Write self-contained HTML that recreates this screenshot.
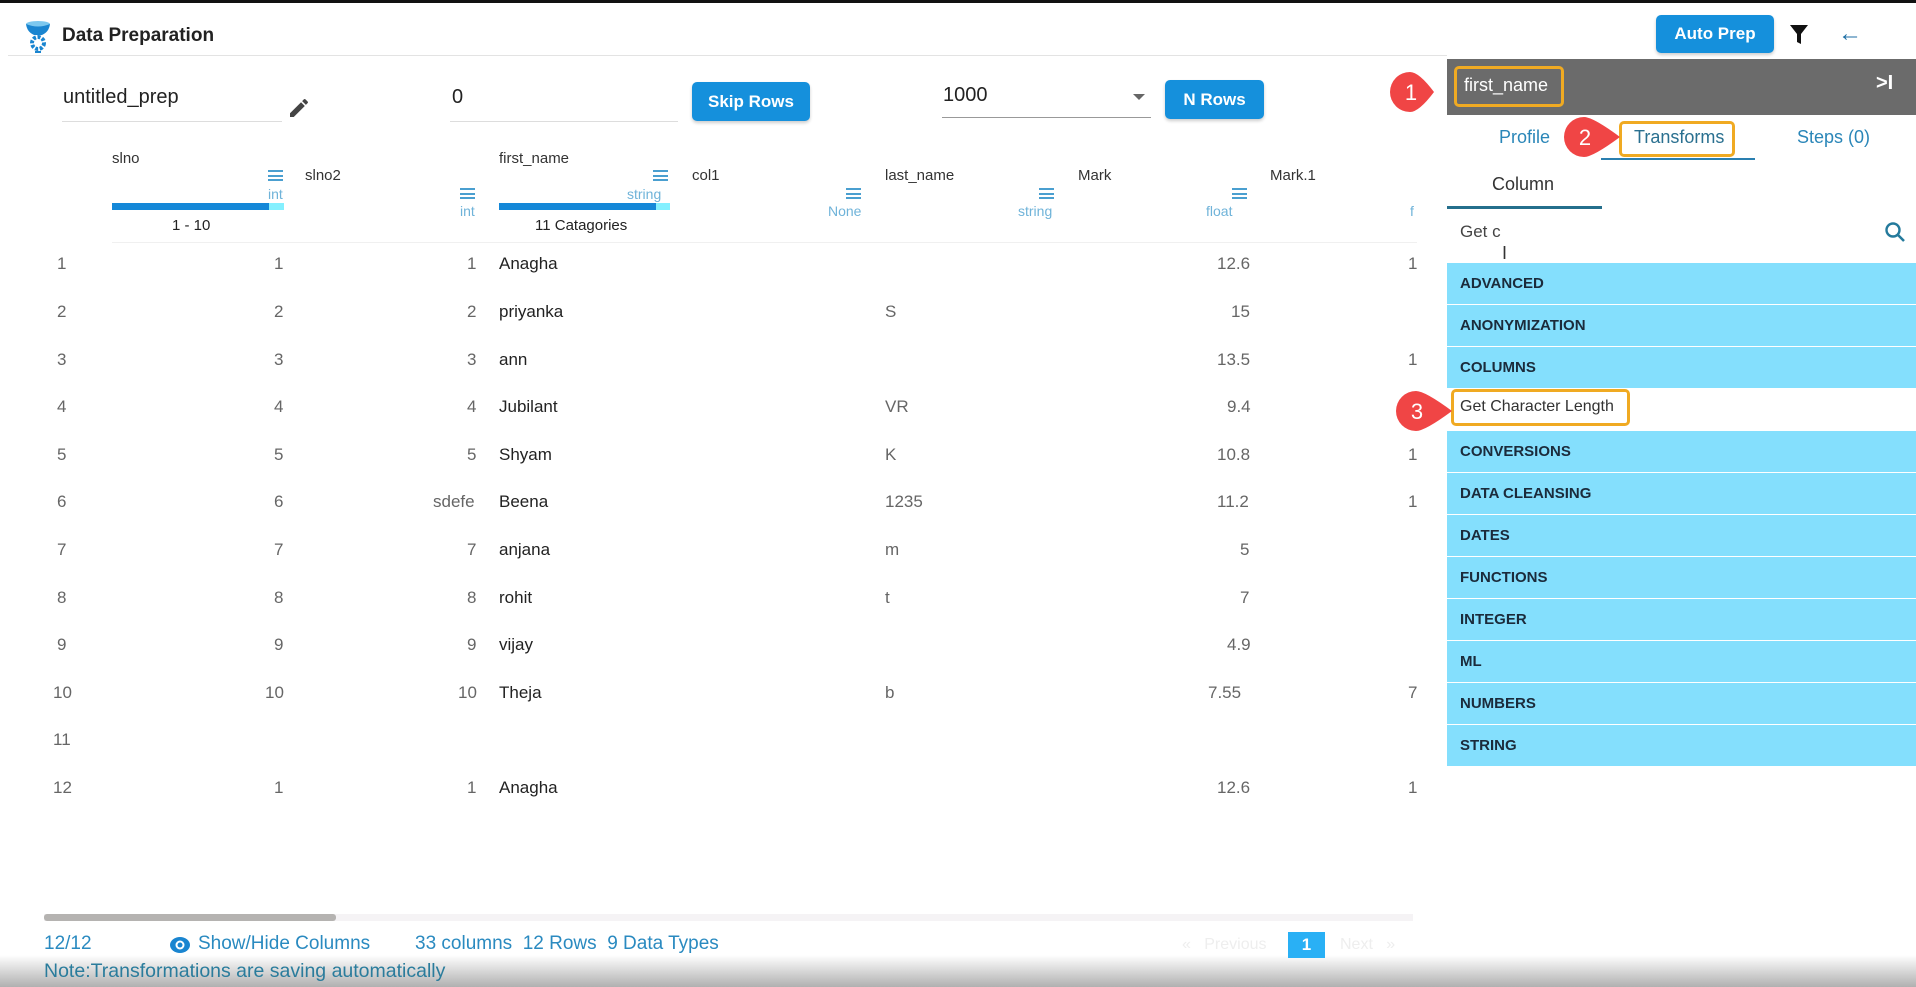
<!DOCTYPE html>
<html><head><meta charset="utf-8">
<style>
*{margin:0;padding:0;box-sizing:border-box}
body{width:1916px;height:987px;overflow:hidden;background:#fff;font-family:"Liberation Sans",sans-serif;position:relative;color:#222}
.a{position:absolute;white-space:nowrap}
.btn{position:absolute;background:#1590dc;color:#fff;border-radius:5px;font-size:17px;font-weight:bold;display:flex;align-items:center;justify-content:center;box-shadow:0 2px 3px rgba(0,0,0,.2)}
.hd{font-size:15px;color:#333}
.ty{font-size:14px;color:#6fb3d9}
.mn{position:absolute;width:15px;height:11px;border-top:2px solid #4a9fd0;border-bottom:2px solid #4a9fd0}
.mn:after{content:"";position:absolute;left:0;right:0;top:2.5px;height:2px;background:#4a9fd0}
.c{font-size:17px;color:#666;position:absolute}
.n{font-size:17px;color:#222;position:absolute}
.cat{position:absolute;left:1447px;width:469px;height:41px;background:#84dffd;font-size:15px;font-weight:bold;color:#1b2b3b;padding-left:13px;line-height:41px}
.box{position:absolute;border:3px solid #f0aa22;border-radius:5px}
.ft{font-size:19px;color:#2a8ac0}
</style></head><body>
<div class="a" style="left:0;top:0;width:1916px;height:3px;background:#111"></div>
<svg class="a" style="left:24px;top:20px" width="28" height="34" viewBox="0 0 28 34">
<ellipse cx="14" cy="4" rx="12" ry="3" fill="#7cc8ef"/>
<path d="M2 4 Q3 12 10 15 L18 15 Q25 12 26 4 Q14 9 2 4Z" fill="#1a85d0"/>
<circle cx="14" cy="23" r="6" fill="none" stroke="#1a85d0" stroke-width="4" stroke-dasharray="3 1.6"/>
<circle cx="14" cy="23" r="2" fill="#fff"/>
<rect x="11" y="31" width="6" height="2" fill="#1a85d0"/>
</svg>
<div class="a" style="left:62px;top:25px;font-size:19px;font-weight:bold;color:#222">Data Preparation</div>
<div class="a" style="left:8px;top:55px;width:1439px;height:1px;background:#e3e3e3"></div>
<div class="btn" style="left:1656px;top:15px;width:118px;height:38px">Auto Prep</div>
<svg class="a" style="left:1790px;top:25px" width="18" height="20" viewBox="0 0 18 20"><path d="M0 0H18L11 9V19L7 17V9Z" fill="#111"/></svg>
<div class="a" style="left:1838px;top:20px;font-size:24px;color:#1c6ea4">←</div>

<div class="a" style="left:63px;top:86px;font-size:20px;color:#222">untitled_prep</div>
<div class="a" style="left:62px;top:121px;width:220px;height:1px;background:#ddd"></div>
<svg class="a" style="left:287px;top:96px" width="24" height="24" viewBox="0 0 24 24"><path d="M3 17.25V21h3.75L17.81 9.94l-3.75-3.75L3 17.25zM20.71 7.04a1 1 0 000-1.41l-2.34-2.34a1 1 0 00-1.41 0l-1.83 1.83 3.75 3.75 1.83-1.83z" fill="#444"/></svg>
<div class="a" style="left:452px;top:86px;font-size:20px;color:#222">0</div>
<div class="a" style="left:450px;top:121px;width:228px;height:1px;background:#ddd"></div>
<div class="btn" style="left:692px;top:82px;width:118px;height:39px">Skip Rows</div>
<div class="a" style="left:943px;top:84px;font-size:20px;color:#222">1000</div>
<div class="a" style="left:1133px;top:94px;width:0;height:0;border-left:6px solid transparent;border-right:6px solid transparent;border-top:6px solid #666"></div>
<div class="a" style="left:942px;top:117px;width:209px;height:1px;background:#999"></div>
<div class="btn" style="left:1165px;top:80px;width:99px;height:39px">N Rows</div>

<div class="a hd" style="left:112px;top:150px">slno</div>
<div class="mn" style="left:268px;top:170px"></div>
<div class="a ty" style="left:268px;top:186px">int</div>
<div class="a" style="left:112px;top:203px;width:172px;height:7px;background:#84f0ff"></div>
<div class="a" style="left:112px;top:203px;width:157px;height:7px;background:#1488d8"></div>
<div class="a" style="left:172px;top:217px;font-size:15px;color:#222">1 - 10</div>

<div class="a hd" style="left:305px;top:167px">slno2</div>
<div class="mn" style="left:460px;top:188px"></div>
<div class="a ty" style="left:460px;top:203px">int</div>

<div class="a hd" style="left:499px;top:150px">first_name</div>
<div class="mn" style="left:653px;top:170px"></div>
<div class="a ty" style="left:627px;top:186px">string</div>
<div class="a" style="left:499px;top:203px;width:171px;height:7px;background:#84f0ff"></div>
<div class="a" style="left:499px;top:203px;width:157px;height:7px;background:#1488d8"></div>
<div class="a" style="left:535px;top:217px;font-size:15px;color:#222">11 Catagories</div>

<div class="a hd" style="left:692px;top:167px">col1</div>
<div class="mn" style="left:846px;top:188px"></div>
<div class="a ty" style="left:828px;top:203px">None</div>

<div class="a hd" style="left:885px;top:167px">last_name</div>
<div class="mn" style="left:1039px;top:188px"></div>
<div class="a ty" style="left:1018px;top:203px">string</div>

<div class="a hd" style="left:1078px;top:167px">Mark</div>
<div class="mn" style="left:1232px;top:188px"></div>
<div class="a ty" style="left:1206px;top:203px">float</div>

<div class="a hd" style="left:1270px;top:167px">Mark.1</div>
<div class="a ty" style="left:1410px;top:203px">f</div>
<div class="a" style="left:112px;top:242px;width:1305px;height:1px;background:#f0f0f0"></div>

<div class="c" style="left:57px;top:254px">1</div><div class="c" style="left:274px;top:254px">1</div><div class="c" style="left:467px;top:254px">1</div><div class="n" style="left:499px;top:254px">Anagha</div><div class="c" style="left:1217px;top:254px">12.6</div><div class="c" style="left:1408px;top:254px">1</div>
<div class="c" style="left:57px;top:302px">2</div><div class="c" style="left:274px;top:302px">2</div><div class="c" style="left:467px;top:302px">2</div><div class="n" style="left:499px;top:302px">priyanka</div><div class="c" style="left:885px;top:302px">S</div><div class="c" style="left:1231px;top:302px">15</div>
<div class="c" style="left:57px;top:350px">3</div><div class="c" style="left:274px;top:350px">3</div><div class="c" style="left:467px;top:350px">3</div><div class="n" style="left:499px;top:350px">ann</div><div class="c" style="left:1217px;top:350px">13.5</div><div class="c" style="left:1408px;top:350px">1</div>
<div class="c" style="left:57px;top:397px">4</div><div class="c" style="left:274px;top:397px">4</div><div class="c" style="left:467px;top:397px">4</div><div class="n" style="left:499px;top:397px">Jubilant</div><div class="c" style="left:885px;top:397px">VR</div><div class="c" style="left:1227px;top:397px">9.4</div>
<div class="c" style="left:57px;top:445px">5</div><div class="c" style="left:274px;top:445px">5</div><div class="c" style="left:467px;top:445px">5</div><div class="n" style="left:499px;top:445px">Shyam</div><div class="c" style="left:885px;top:445px">K</div><div class="c" style="left:1217px;top:445px">10.8</div><div class="c" style="left:1408px;top:445px">1</div>
<div class="c" style="left:57px;top:492px">6</div><div class="c" style="left:274px;top:492px">6</div><div class="c" style="left:433px;top:492px">sdefe</div><div class="n" style="left:499px;top:492px">Beena</div><div class="c" style="left:885px;top:492px">1235</div><div class="c" style="left:1217px;top:492px">11.2</div><div class="c" style="left:1408px;top:492px">1</div>
<div class="c" style="left:57px;top:540px">7</div><div class="c" style="left:274px;top:540px">7</div><div class="c" style="left:467px;top:540px">7</div><div class="n" style="left:499px;top:540px">anjana</div><div class="c" style="left:885px;top:540px">m</div><div class="c" style="left:1240px;top:540px">5</div>
<div class="c" style="left:57px;top:588px">8</div><div class="c" style="left:274px;top:588px">8</div><div class="c" style="left:467px;top:588px">8</div><div class="n" style="left:499px;top:588px">rohit</div><div class="c" style="left:885px;top:588px">t</div><div class="c" style="left:1240px;top:588px">7</div>
<div class="c" style="left:57px;top:635px">9</div><div class="c" style="left:274px;top:635px">9</div><div class="c" style="left:467px;top:635px">9</div><div class="n" style="left:499px;top:635px">vijay</div><div class="c" style="left:1227px;top:635px">4.9</div>
<div class="c" style="left:53px;top:683px">10</div><div class="c" style="left:265px;top:683px">10</div><div class="c" style="left:458px;top:683px">10</div><div class="n" style="left:499px;top:683px">Theja</div><div class="c" style="left:885px;top:683px">b</div><div class="c" style="left:1208px;top:683px">7.55</div><div class="c" style="left:1408px;top:683px">7</div>
<div class="c" style="left:53px;top:730px">11</div>
<div class="c" style="left:53px;top:778px">12</div><div class="c" style="left:274px;top:778px">1</div><div class="c" style="left:467px;top:778px">1</div><div class="n" style="left:499px;top:778px">Anagha</div><div class="c" style="left:1217px;top:778px">12.6</div><div class="c" style="left:1408px;top:778px">1</div>

<div class="a" style="left:44px;top:914px;width:1369px;height:7px;background:#f5f3f5"></div>
<div class="a" style="left:44px;top:914px;width:292px;height:7px;background:#b5b3b1;border-radius:3px"></div>

<div class="a" style="left:0;top:955px;width:1916px;height:32px;background:linear-gradient(#fff,#b0b0b0)"></div>
<div class="a ft" style="left:44px;top:933px">12/12</div>
<svg class="a" style="left:169px;top:936px" width="22" height="18" viewBox="0 0 22 18"><ellipse cx="11" cy="9" rx="10" ry="8" fill="#1a85d0"/><circle cx="11" cy="9" r="4.5" fill="#fff"/><circle cx="11" cy="9" r="2.5" fill="#1a85d0"/></svg>
<div class="a ft" style="left:198px;top:933px">Show/Hide Columns</div>
<div class="a ft" style="left:415px;top:933px">33 columns &nbsp;12 Rows &nbsp;9 Data Types</div>
<div class="a" style="left:1182px;top:936px;font-size:16px;color:#eee">« &nbsp;&nbsp;Previous</div>
<div class="a" style="left:1288px;top:932px;width:37px;height:26px;background:#29b0f5;color:#fff;font-size:17px;font-weight:bold;text-align:center;line-height:26px">1</div>
<div class="a" style="left:1340px;top:936px;font-size:16px;color:#eee">Next &nbsp;&nbsp;»</div>
<div class="a" style="left:44px;top:960px;font-size:19.5px;color:#2a7c9c">Note:Transformations are saving automatically</div>

<div class="a" style="left:1447px;top:59px;width:469px;height:56px;background:#6b6b6b"></div>
<div class="a" style="left:1464px;top:75px;font-size:18px;color:#fff">first_name</div>
<div class="a" style="left:1876px;top:72px;font-size:20px;color:#fff;font-weight:bold">&gt;I</div>
<div class="a" style="left:1499px;top:127px;font-size:18px;color:#2a86b8">Profile</div>
<div class="a" style="left:1634px;top:127px;font-size:18px;color:#2a7090">Transforms</div>
<div class="a" style="left:1797px;top:127px;font-size:18px;color:#2a86b8">Steps (0)</div>
<div class="a" style="left:1601px;top:158px;width:154px;height:2px;background:#2a7fb0"></div>
<div class="a" style="left:1492px;top:174px;font-size:18px;color:#333">Column</div>
<div class="a" style="left:1447px;top:206px;width:155px;height:3px;background:#246f8c"></div>
<div class="a" style="left:1460px;top:222px;font-size:17px;color:#444">Get c</div>
<div class="a" style="left:1502px;top:243px;font-size:18px;color:#333">I</div>
<svg class="a" style="left:1884px;top:221px" width="22" height="22" viewBox="0 0 22 22"><circle cx="9" cy="9" r="6.5" fill="none" stroke="#247a9c" stroke-width="2.4"/><path d="M14 14L20 20" stroke="#247a9c" stroke-width="2.6"/></svg>
<div class="cat" style="top:263px">ADVANCED</div>
<div class="cat" style="top:305px">ANONYMIZATION</div>
<div class="cat" style="top:347px">COLUMNS</div>
<div class="a" style="left:1460px;top:398px;font-size:16px;color:#333">Get Character Length</div>
<div class="cat" style="top:431px">CONVERSIONS</div>
<div class="cat" style="top:473px">DATA CLEANSING</div>
<div class="cat" style="top:515px">DATES</div>
<div class="cat" style="top:557px">FUNCTIONS</div>
<div class="cat" style="top:599px">INTEGER</div>
<div class="cat" style="top:641px">ML</div>
<div class="cat" style="top:683px">NUMBERS</div>
<div class="cat" style="top:725px">STRING</div>

<div class="box" style="left:1454px;top:66px;width:110px;height:41px"></div>
<div class="box" style="left:1619px;top:121px;width:116px;height:36px"></div>
<div class="box" style="left:1451px;top:389px;width:179px;height:37px"></div>
<svg class="a" style="left:1389px;top:71px" width="60" height="42" viewBox="0 0 60 42"><path d="M21 1 A20 20 0 1 0 21 41 Q30 41 45 21 Q30 1 21 1Z" fill="#f04545"/><text x="22" y="29" font-size="22" fill="#fff" text-anchor="middle" font-family="Liberation Sans">1</text></svg>
<svg class="a" style="left:1563px;top:116px" width="60" height="42" viewBox="0 0 60 42"><path d="M21 1 A20 20 0 1 0 21 41 Q30 41 57 21 Q30 1 21 1Z" fill="#f04545"/><text x="22" y="29" font-size="22" fill="#fff" text-anchor="middle" font-family="Liberation Sans">2</text></svg>
<svg class="a" style="left:1395px;top:390px" width="60" height="42" viewBox="0 0 60 42"><path d="M21 1 A20 20 0 1 0 21 41 Q30 41 57 21 Q30 1 21 1Z" fill="#f04545"/><text x="22" y="29" font-size="22" fill="#fff" text-anchor="middle" font-family="Liberation Sans">3</text></svg>
</body></html>
